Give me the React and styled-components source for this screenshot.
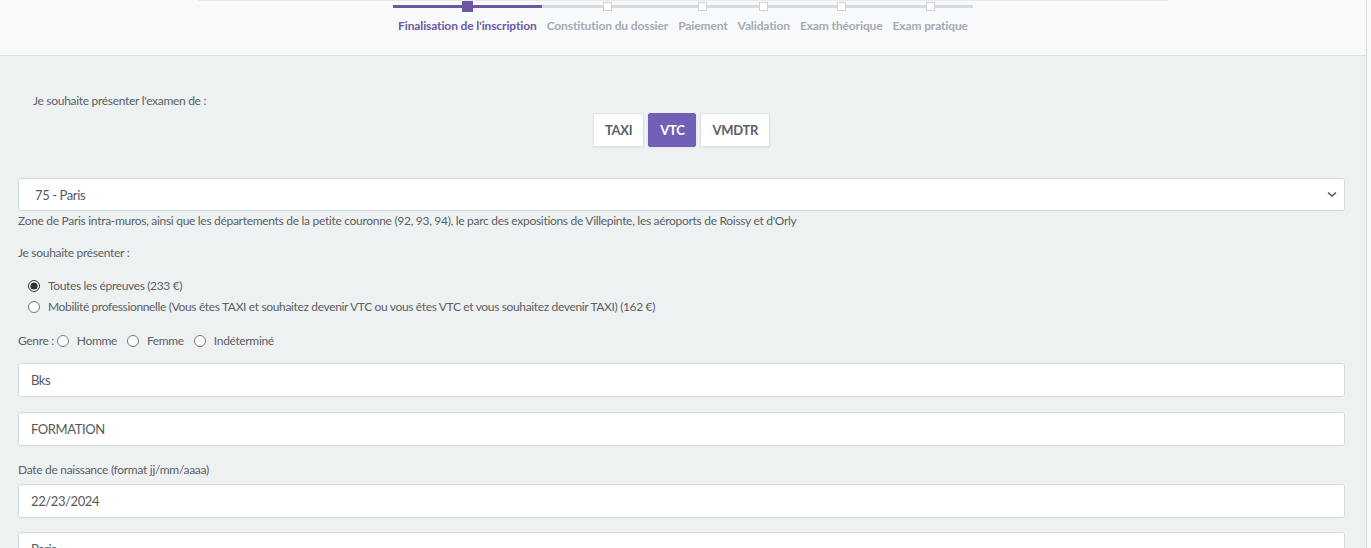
import React from "react";
import styled, { createGlobalStyle } from "styled-components";

const Global = createGlobalStyle`
  html, body { margin: 0; padding: 0; }
  body {
    font-family: "Lato", "Open Sans", sans-serif;
    background: #eef1f2;
    color: #555b60;
    overflow: hidden;
  }
`;

const PURPLE = "#7160b5";

const Page = styled.div`
  display: flex;
  width: 1371px;
  height: 548px;
  overflow: hidden;
`;

const Main = styled.div`
  flex: 1;
  display: flex;
  flex-direction: column;
  min-width: 0;
`;

const ScrollStrip = styled.div`
  width: 4px;
  background: #f7f9fa;
  border-left: 1px solid #d5dde1;
`;

const Header = styled.header`
  height: 55px;
  background: #f8f9fb;
  border-bottom: 1px solid #dce1e4;
  display: flex;
  flex-direction: column;
  flex-shrink: 0;
`;

const TopShade = styled.div`
  height: 1px;
  margin: 0 198px;
  background: #e6e9ec;
`;

const Stepper = styled.nav`
  display: flex;
  justify-content: center;
`;

const Step = styled.div`
  display: flex;
  flex-direction: column;
  align-items: center;
  padding: 0 5px;
  background: linear-gradient(${(p) => (p.$done ? "#6e56a5" : "#d6dbe0")}, ${(p) => (p.$done ? "#6e56a5" : "#d6dbe0")}) 0 4px / 100% 3px no-repeat;
`;

const Dot = styled.span`
  width: ${(p) => (p.$active ? "11px" : "9px")};
  height: ${(p) => (p.$active ? "11px" : "9px")};
  box-sizing: border-box;
  background: ${(p) => (p.$active ? "#6e56a5" : "#fff")};
  border: 1px solid ${(p) => (p.$active ? "#6e56a5" : "#ccd2d8")};
  margin-top: ${(p) => (p.$active ? "0px" : "1px")};
  margin-bottom: ${(p) => (p.$active ? "0px" : "1px")};
`;

const StepLabel = styled.span`
  margin-top: 6px;
  font-size: 12px;
  letter-spacing: -0.12px;
  font-weight: 700;
  white-space: nowrap;
  color: ${(p) => (p.$active ? "#6d5aa3" : "#a3abb3")};
`;

const Content = styled.main`
  padding: 37px 21px 0 18px;
  display: flex;
  flex-direction: column;
`;

const SmallText = styled.div`
  font-size: 12px;
  letter-spacing: -0.3px;
  color: #5a5f64;
  padding-left: ${(p) => p.$indent || 0}px;
  margin-top: ${(p) => p.$mt || 0}px;
  line-height: 16px;
`;

const ExamGroup = styled.div`
  display: flex;
  justify-content: center;
  gap: 4px;
  margin-top: 4px;
`;

const ExamButton = styled.button`
  height: 34px;
  padding: 0 11px;
  font-family: inherit;
  font-size: 13px;
  letter-spacing: -0.3px;
  font-weight: 700;
  border-radius: 2px;
  border: 1px solid ${(p) => (p.$active ? PURPLE : "#dde2e5")};
  background: ${(p) => (p.$active ? PURPLE : "#fff")};
  color: ${(p) => (p.$active ? "#fff" : "#5b6066")};
  box-shadow: 0 1px 2px rgba(0, 0, 0, 0.06);
  cursor: pointer;
`;

const SelectWrap = styled.div`
  position: relative;
  margin-top: 31px;
`;

const Select = styled.select`
  appearance: none;
  width: 100%;
  height: 33px;
  box-sizing: border-box;
  border: 1px solid #d3dadd;
  border-radius: 3px;
  background: #fff;
  padding: 0 16px;
  font-family: inherit;
  font-size: 13px;
  letter-spacing: -0.4px;
  color: #54595e;
  outline: none;
`;

const Chevron = styled.svg`
  position: absolute;
  right: 8px;
  top: 13px;
  pointer-events: none;
`;

const RadioList = styled.div`
  display: flex;
  flex-direction: column;
  gap: 6px;
  margin-top: 17px;
  padding-left: 10px;
`;

const RadioLabel = styled.label`
  display: inline-flex;
  align-items: center;
  font-size: 12px;
  letter-spacing: -0.35px;
  color: #5a5f64;
  margin-right: ${(p) => p.$mr || 0}px;
`;

const Radio = styled.input.attrs({ type: "radio" })`
  width: 12px;
  height: 12px;
  margin: 0 8px 0 0;
  accent-color: #333;
`;

const GenreRow = styled.div`
  display: flex;
  align-items: center;
  font-size: 12px;
  letter-spacing: -0.35px;
  margin-top: 19px;
  color: #5a5f64;
`;

const GenreTitle = styled.span`
  margin-right: 3px;
`;

const Field = styled.input`
  width: 100%;
  height: 34px;
  box-sizing: border-box;
  border: 1px solid #d3dadd;
  border-radius: 3px;
  background: #fff;
  padding: 0 12px;
  font-family: inherit;
  font-size: 13px;
  letter-spacing: -0.4px;
  color: #54595e;
  margin-top: ${(p) => p.$mt || 0}px;
  outline: none;
`;

const steps = [
  "Finalisation de l'inscription",
  "Constitution du dossier",
  "Paiement",
  "Validation",
  "Exam théorique",
  "Exam pratique",
];

export default function App() {
  return (
    <Page>
      <Global />
      <Main>
        <Header>
          <TopShade />
          <Stepper>
            {steps.map((s, i) => (
              <Step key={s} $done={i === 0}>
                <Dot $active={i === 0} />
                <StepLabel $active={i === 0}>{s}</StepLabel>
              </Step>
            ))}
          </Stepper>
        </Header>
        <Content>
          <SmallText $indent={15}>Je souhaite présenter l'examen de :</SmallText>
          <ExamGroup>
            <ExamButton>TAXI</ExamButton>
            <ExamButton $active>VTC</ExamButton>
            <ExamButton>VMDTR</ExamButton>
          </ExamGroup>
          <SelectWrap>
            <Select defaultValue="75">
              <option value="75">75 - Paris</option>
            </Select>
            <Chevron width="10" height="7" viewBox="0 0 10 7">
              <path d="M1 1.5 L5 5 L9 1.5" fill="none" stroke="#555" strokeWidth="1.5" />
            </Chevron>
          </SelectWrap>
          <SmallText $mt={2}>
            Zone de Paris intra-muros, ainsi que les départements de la petite couronne (92, 93, 94), le parc des expositions de Villepinte, les aéroports de Roissy et d'Orly
          </SmallText>
          <SmallText $mt={16}>Je souhaite présenter :</SmallText>
          <RadioList>
            <RadioLabel>
              <Radio name="epreuves" defaultChecked />
              Toutes les épreuves (233 €)
            </RadioLabel>
            <RadioLabel>
              <Radio name="epreuves" />
              Mobilité professionnelle (Vous êtes TAXI et souhaitez devenir VTC ou vous êtes VTC et vous souhaitez devenir TAXI) (162 €)
            </RadioLabel>
          </RadioList>
          <GenreRow>
            <GenreTitle>Genre :</GenreTitle>
            <RadioLabel $mr={10}>
              <Radio name="genre" />
              Homme
            </RadioLabel>
            <RadioLabel $mr={10}>
              <Radio name="genre" />
              Femme
            </RadioLabel>
            <RadioLabel>
              <Radio name="genre" />
              Indéterminé
            </RadioLabel>
          </GenreRow>
          <Field $mt={15} defaultValue="Bks" />
          <Field $mt={15} defaultValue="FORMATION" />
          <SmallText $mt={16}>Date de naissance (format jj/mm/aaaa)</SmallText>
          <Field $mt={6} defaultValue="22/23/2024" />
          <Field $mt={14} defaultValue="Paris" />
        </Content>
      </Main>
      <ScrollStrip />
    </Page>
  );
}
